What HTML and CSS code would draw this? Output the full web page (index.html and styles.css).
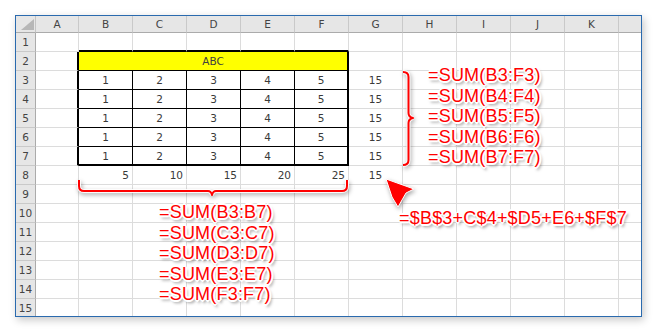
FILE: index.html
```html
<!DOCTYPE html>
<html lang="ja">
<head>
<meta charset="utf-8">
<title>SUM</title>
<link rel="stylesheet" href="styles.css">
</head>
<body>
<div class="stage">
  <div class="sheet">
    <div class="corner"><svg width="20" height="16" viewBox="0 0 20 16"><polygon points="18,3 18,14 5,14" fill="#b7b7b7"/></svg></div>
    <div class="ch">A</div><div class="ch">B</div><div class="ch">C</div><div class="ch">D</div><div class="ch">E</div><div class="ch">F</div><div class="ch">G</div><div class="ch">H</div><div class="ch">I</div><div class="ch">J</div><div class="ch">K</div><div class="ch last"></div>

    <div class="rh">1</div><div></div><div class="tb"></div><div class="tb"></div><div class="tb"></div><div class="tb"></div><div class="tb"></div><div></div><div></div><div></div><div></div><div></div><div class="last"></div>

    <div class="rh">2</div><div class="lb"></div><div class="title">ABC</div><div></div><div></div><div></div><div></div><div></div><div class="last"></div>

    <div class="rh">3</div><div class="lb"></div><div class="t">1</div><div class="t">2</div><div class="t">3</div><div class="t">4</div><div class="t rb">5</div><div class="n">15</div><div></div><div></div><div></div><div></div><div class="last"></div>

    <div class="rh">4</div><div class="lb"></div><div class="t">1</div><div class="t">2</div><div class="t">3</div><div class="t">4</div><div class="t rb">5</div><div class="n">15</div><div></div><div></div><div></div><div></div><div class="last"></div>

    <div class="rh">5</div><div class="lb"></div><div class="t">1</div><div class="t">2</div><div class="t">3</div><div class="t">4</div><div class="t rb">5</div><div class="n">15</div><div></div><div></div><div></div><div></div><div class="last"></div>

    <div class="rh">6</div><div class="lb"></div><div class="t">1</div><div class="t">2</div><div class="t">3</div><div class="t">4</div><div class="t rb">5</div><div class="n">15</div><div></div><div></div><div></div><div></div><div class="last"></div>

    <div class="rh">7</div><div class="lb"></div><div class="t bb">1</div><div class="t bb">2</div><div class="t bb">3</div><div class="t bb">4</div><div class="t rb bb">5</div><div class="n">15</div><div></div><div></div><div></div><div></div><div class="last"></div>

    <div class="rh">8</div><div></div><div class="r">5</div><div class="r">10</div><div class="r">15</div><div class="r">20</div><div class="r">25</div><div class="n">15</div><div></div><div></div><div></div><div></div><div class="last"></div>

    <div class="rh">9</div><div></div><div></div><div></div><div></div><div></div><div></div><div></div><div></div><div></div><div></div><div></div><div class="last"></div>
    <div class="rh">10</div><div></div><div></div><div></div><div></div><div></div><div></div><div></div><div></div><div></div><div></div><div></div><div class="last"></div>
    <div class="rh">11</div><div></div><div></div><div></div><div></div><div></div><div></div><div></div><div></div><div></div><div></div><div></div><div class="last"></div>
    <div class="rh">12</div><div></div><div></div><div></div><div></div><div></div><div></div><div></div><div></div><div></div><div></div><div></div><div class="last"></div>
    <div class="rh">13</div><div></div><div></div><div></div><div></div><div></div><div></div><div></div><div></div><div></div><div></div><div></div><div class="last"></div>
    <div class="rh">14</div><div></div><div></div><div></div><div></div><div></div><div></div><div></div><div></div><div></div><div></div><div></div><div class="last"></div>
    <div class="rh end">15</div><div class="end"></div><div class="end"></div><div class="end"></div><div class="end"></div><div class="end"></div><div class="end"></div><div class="end"></div><div class="end"></div><div class="end"></div><div class="end"></div><div class="end"></div><div class="last end"></div>
  </div>

  <svg class="marks" width="657" height="333" viewBox="0 0 657 333">
    <g class="brace-out">
      <path d="M403,72 Q408.5,72 408.5,77 L408.5,113 Q408.5,117 413,118 Q408.5,119 408.5,123 L408.5,160 Q408.5,165 403,165"/>
      <path d="M79,180 L79,186 Q79,191 84,191 L208,191 Q211,191 212,195 Q213,191 216,191 L342,191 Q347,191 347,186 L347,180"/>
    </g>
    <g class="brace">
      <path d="M403,72 Q408.5,72 408.5,77 L408.5,113 Q408.5,117 413,118 Q408.5,119 408.5,123 L408.5,160 Q408.5,165 403,165"/>
      <path d="M79,180 L79,186 Q79,191 84,191 L208,191 Q211,191 212,195 Q213,191 216,191 L342,191 Q347,191 347,186 L347,180"/>
    </g>
    <polygon class="arrow" points="386,179 414,189 406,193 398,207 392,197"/>
  </svg>

  <div class="note note-rows">=SUM(B3:F3)<br>=SUM(B4:F4)<br>=SUM(B5:F5)<br>=SUM(B6:F6)<br>=SUM(B7:F7)</div>
  <div class="note note-cols">=SUM(B3:B7)<br>=SUM(C3:C7)<br>=SUM(D3:D7)<br>=SUM(E3:E7)<br>=SUM(F3:F7)</div>
  <div class="note note-mix">=$B$3+C$4+$D5+E6+$F$7</div>
</div>
</body>
</html>
```

FILE: styles.css
```css
html, body {
  margin: 0;
  padding: 0;
  background: #ffffff;
}

.stage {
  position: relative;
  width: 657px;
  height: 333px;
  padding: 15px 0 0 15px;
  box-sizing: border-box;
}

.sheet {
  width: 627px;
  box-sizing: border-box;
  border: 1px solid #2a6aae;
  box-shadow: 2px 3px 8px rgba(0, 0, 0, 0.22);
  display: grid;
  grid-template-columns: 20px 43px repeat(10, 54px) 1fr;
  grid-template-rows: 17px repeat(14, 19px) 17px;
  background: #ffffff;
  font-family: "DejaVu Sans", "Noto Sans CJK JP", sans-serif;
  font-size: 10.5px;
  color: #3a3a3a;
  overflow: hidden;
}

.sheet > div {
  box-sizing: border-box;
  border-right: 1px solid #dcdcdc;
  border-bottom: 1px solid #dcdcdc;
  line-height: 18px;
  text-align: center;
  white-space: nowrap;
}

.sheet .corner {
  background: #e6e6e6;
  border-right: 1px solid #c4c4c4;
  border-bottom: 1px solid #ababab;
  line-height: 0;
}

.sheet .ch {
  background: #e6e6e6;
  border-right: 1px solid #c9c9c9;
  border-bottom: 1px solid #ababab;
  line-height: 16px;
  color: #444444;
}

.sheet .rh {
  background: #e6e6e6;
  border-right: 1px solid #ababab;
  border-bottom: 1px solid #c9c9c9;
  text-align: center;
  color: #444444;
}

.sheet .last {
  border-right: none;
}

.sheet .end {
  border-bottom: none;
}

.sheet .tb {
  border-bottom: 2px solid #000000;
}

.sheet .lb {
  border-right: 2px solid #000000;
}

.sheet .title {
  grid-column: span 5;
  background: #ffff00;
  border-right: 2px solid #000000;
  border-bottom: 1px solid #000000;
  color: #404040;
}

.sheet .t {
  border-right: 1px solid #000000;
  border-bottom: 1px solid #000000;
}

.sheet .rb {
  border-right: 2px solid #000000;
}

.sheet .bb {
  border-bottom: 2px solid #000000;
}

.sheet .r {
  text-align: right;
  padding-right: 3px;
}

.sheet .n {
  text-align: center;
}

.marks {
  position: absolute;
  left: 0;
  top: 0;
  pointer-events: none;
}

.brace-out path {
  fill: none;
  stroke: rgba(255, 255, 255, 0.9);
  stroke-width: 4;
  filter: drop-shadow(1px 2px 2px rgba(0, 0, 0, 0.35));
}

.brace path {
  fill: none;
  stroke: #ff0000;
  stroke-width: 2;
  stroke-linejoin: round;
}

.arrow {
  fill: #ff0000;
  stroke: #ffffff;
  stroke-width: 1;
  filter: drop-shadow(1px 2px 2px rgba(0, 0, 0, 0.35));
}

.note {
  position: absolute;
  font-family: "Liberation Sans", Arial, sans-serif;
  font-size: 18px;
  letter-spacing: 0.2px;
  line-height: 20.5px;
  color: #ff0000;
  white-space: nowrap;
  text-shadow:
    -1px -1px 0 #fff, 1px -1px 0 #fff, -1px 1px 0 #fff, 1px 1px 0 #fff,
    0 -2px 0 #fff, 0 2px 0 #fff, -2px 0 0 #fff, 2px 0 0 #fff,
    2px 3px 3px rgba(0, 0, 0, 0.5);
}

.note-rows {
  left: 428px;
  top: 65px;
}

.note-cols {
  left: 159px;
  top: 202px;
}

.note-mix {
  left: 399px;
  top: 208px;
}
```
